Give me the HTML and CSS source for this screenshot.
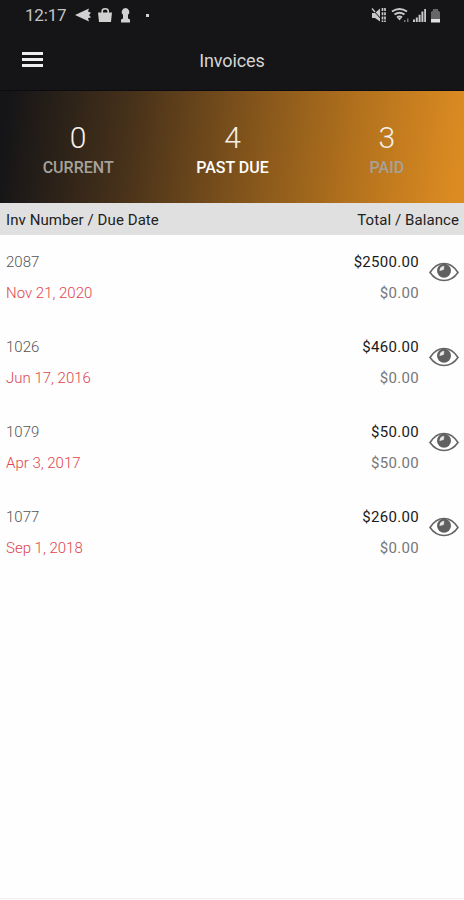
FILE: index.html
```
<!DOCTYPE html>
<html lang="en">
<head>
  <meta charset="UTF-8">
  <meta name="viewport" content="width=device-width,initial-scale=1.0">
  <title>Invoices</title>
  <link rel="stylesheet" href="styles.css">
</head>
<body>
  <svg class="defs" width="0" height="0">
    <symbol id="eye" viewBox="0 0 30 20">
      <path d="M1 10.500C4.500 5 9 1.500 15 1.500s10.500 3.500 14 9c-3.500 5-8 8-14 8s-10.500-3-14-8z" fill="#fff" stroke="#666" stroke-width="1.600"/>
      <circle cx="15" cy="8.800" r="7" fill="#606060"/>
      <path d="M10.800 8.500q.2-3.800 4-4.300l-.3 3.300z" fill="#e8e8e8" stroke="#e8e8e8" stroke-width=".8"/>
    </symbol>
  </svg>

  <div class="status-bar">
    <span class="clock">12:17</span>
    <svg class="status-left" width="80" height="20" viewBox="0 0 80 20" fill="#d0d0d0">
      <path d="M0 10 14 3.500 13 6.500l3 1.200-2 2.300 2 2.300-3 1 1 3.200z"/>
      <path d="M23 7.500h14l-1 9.500H24z"/>
      <path d="M27.200 9V6q0-2.300 3-2.300t3 2.300v3" fill="none" stroke="#d0d0d0" stroke-width="1.600"/>
      <path d="M50.500 3a4 4 0 0 1 2.500 7v3.500l2 1V17.500h-9v-3l2-1V10a4 4 0 0 1 2.500-7z"/>
      <rect x="71" y="9" width="3" height="3"/>
    </svg>
    <svg class="status-right" width="72" height="20" viewBox="0 0 72 20" fill="#c8c8c8">
      <path d="M2 8h3l5-4.500v13L5 13H2z"/>
      <path d="m2 4 11 12" stroke="#151517" stroke-width="1"/>
      <path d="M2 3.500 5 7" stroke="#c8c8c8" stroke-width="1.300"/>
      <path d="M12.500 3v14M15 3v14" fill="none" stroke="#c8c8c8" stroke-width="1.700" stroke-dasharray="3 1.200"/>
      <g fill="none" stroke="#c8c8c8" stroke-width="2">
        <path d="M22 6.500q7.500-5 15 0M24.500 9.500q5-3.500 10 0M27 12.500q2.500-2 5 0"/>
      </g>
      <path d="m27.500 13 2 2.500 2-2.500z"/>
      <path d="M34 15h1.500v2H34zM37 13.500h1.500V17H37z" fill="#777"/>
      <path d="M43 14.500h2V17h-2zM45.800 12.500h2V17h-2zM48.600 9.800h2V17h-2zM51.400 6.500h2V17h-2z"/>
      <path d="M54.200 4H56v13h-1.800z"/>
      <path d="M61 14V7l2-1.500V4h5v1.500L70 7v7z" fill="#666"/>
      <path d="M61 14h9v3.500h-9z" fill="#e0e0e0"/>
    </svg>
  </div>

  <header>
    <button class="menu" aria-label="Menu"><span></span><span></span><span></span></button>
    <h1>Invoices</h1>
  </header>

  <div class="tabs">
    <div class="tab">
      <div class="count">0</div>
      <div class="label">CURRENT</div>
    </div>
    <div class="tab active">
      <div class="count">4</div>
      <div class="label">PAST DUE</div>
    </div>
    <div class="tab">
      <div class="count">3</div>
      <div class="label">PAID</div>
    </div>
  </div>

  <div class="list-header">
    <span>Inv Number / Due Date</span>
    <span>Total / Balance</span>
  </div>

  <main>
    <div class="invoice">
      <div class="info">
        <div class="number">2087</div>
        <div class="due">Nov 21, 2020</div>
      </div>
      <div class="amounts">
        <div class="total">$2500.00</div>
        <div class="balance">$0.00</div>
      </div>
      <svg class="eye"><use href="#eye"/></svg>
    </div>
    <div class="invoice">
      <div class="info">
        <div class="number">1026</div>
        <div class="due">Jun 17, 2016</div>
      </div>
      <div class="amounts">
        <div class="total">$460.00</div>
        <div class="balance">$0.00</div>
      </div>
      <svg class="eye"><use href="#eye"/></svg>
    </div>
    <div class="invoice">
      <div class="info">
        <div class="number">1079</div>
        <div class="due">Apr 3, 2017</div>
      </div>
      <div class="amounts">
        <div class="total">$50.00</div>
        <div class="balance">$50.00</div>
      </div>
      <svg class="eye"><use href="#eye"/></svg>
    </div>
    <div class="invoice">
      <div class="info">
        <div class="number">1077</div>
        <div class="due">Sep 1, 2018</div>
      </div>
      <div class="amounts">
        <div class="total">$260.00</div>
        <div class="balance">$0.00</div>
      </div>
      <svg class="eye"><use href="#eye"/></svg>
    </div>
  </main>
</body>
</html>
```
FILE: styles.css
```
* { box-sizing:border-box; }
body { font-family: Roboto,sans-serif; margin:0; min-height:100vh; background:#fefefe;
       display:flex; flex-direction:column; }
.defs { display:block; position:absolute; }

.status-bar { display:flex; align-items:center; height:30px; padding:0 22px 0 25px; background:#151517; }
.clock { width:50px; font-size:17px; letter-spacing:-.2px; line-height:30px; color:#c4c4c4; }
.status-left { margin-top:-1px; }
.status-right { margin:-1px 0 0 auto; }

header { display:grid; grid-template-columns:42px 1fr 42px; align-items:center; height:60px;
         background:#151517; }
.menu { display:flex; flex-direction:column; gap:3px; width:21px; margin:-2px 0 0 22px; padding:0; border:none; background:none; }
.menu span { height:3px; background:#eee; }
header h1 { margin:0; font-size:18px; font-weight:400; letter-spacing:-.1px; text-align:center; color:#d4d4d4; }

.tabs { display:grid; grid-template-columns:repeat(3,1fr); height:113px; padding:29px 0 0 1px; border-top:1px solid #0d0b12;
        background:linear-gradient(97deg,#151517 2%,#45301a 27%,#7d511b 51%,#b5731d 77%,#dc8b22 98%); }
.tab { text-align:center; color:#a5a29a; }
.count { font-size:30px; font-weight:300; line-height:35px; color:#f4f0ea; }
.label { font-size:16px; font-weight:500; line-height:25px; }
.tab.active .label { color:#fff; }

.list-header { display:flex; justify-content:space-between; align-items:center; height:32px; padding:1px 5px 0 6px;
               background:#e0e0e0; font-size:15px; letter-spacing:.08px; color:#222; }

main { flex:1; border-bottom:1px solid #f2f2f2; margin-bottom:1px; }
.invoice { display:flex; height:85px; padding:11px 5px 0 6px; font-size:15px; line-height:32px; }
.info { flex:1; font-weight:300; }
.number { color:#555; height:31px; }
.due { color:#e0444c; }
.amounts { text-align:right; margin-right:10px; letter-spacing:.3px; }
.total { color:#1a1a1a; height:31px; }
.balance { color:#777; }
.eye { width:30px; height:20px; margin-top:16px; }
```
